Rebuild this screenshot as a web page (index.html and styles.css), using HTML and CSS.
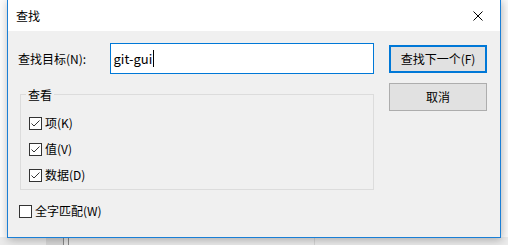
FILE: index.html
```html
<!DOCTYPE html>
<html lang="zh-CN">
<head>
<meta charset="utf-8">
<title>查找</title>
<link rel="stylesheet" href="styles.css">
</head>
<body>
<div class="desktop">
  <div class="desk-fill"></div>
  <div class="desk-strip">
    <div class="strip-a"></div>
    <div class="strip-b"></div>
    <div class="strip-line"></div>
    <div class="strip-gap"></div>
    <div class="strip-line"></div>
    <div class="strip-c"></div>
    <div class="strip-faint"></div>
    <div class="strip-d"></div>
  </div>
</div>

<div class="dialog">
  <div class="titlebar">
    <span class="title">查找</span>
    <svg class="close" width="10" height="10" viewBox="0 0 10 10"><path d="M0.5 0.5 L9.5 9.5 M9.5 0.5 L0.5 9.5" stroke="#000" stroke-width="1" fill="none"/></svg>
  </div>
  <div class="body">
    <div class="left">
      <div class="row-find">
        <span class="find-label">查找目标(N):</span>
        <div class="textbox"><span class="typed">git-gui</span><span class="caret"></span></div>
      </div>
      <div class="group">
        <span class="legend">查看</span>
        <div class="checks">
          <label class="check"><span class="box checked"><svg width="13" height="13" viewBox="0 0 13 13"><rect x="0.5" y="0.5" width="12" height="12" fill="#fff" stroke="#333"/><path d="M2.5 6.5 L5 9 L10.5 3.5" stroke="#333" stroke-width="1" fill="none"/></svg></span>项(K)</label>
          <label class="check"><span class="box checked"><svg width="13" height="13" viewBox="0 0 13 13"><rect x="0.5" y="0.5" width="12" height="12" fill="#fff" stroke="#333"/><path d="M2.5 6.5 L5 9 L10.5 3.5" stroke="#333" stroke-width="1" fill="none"/></svg></span>值(V)</label>
          <label class="check"><span class="box checked"><svg width="13" height="13" viewBox="0 0 13 13"><rect x="0.5" y="0.5" width="12" height="12" fill="#fff" stroke="#333"/><path d="M2.5 6.5 L5 9 L10.5 3.5" stroke="#333" stroke-width="1" fill="none"/></svg></span>数据(D)</label>
        </div>
      </div>
      <label class="check whole"><span class="box"><svg width="13" height="13" viewBox="0 0 13 13"><rect x="0.5" y="0.5" width="12" height="12" fill="#fff" stroke="#333"/></svg></span>全字匹配(W)</label>
    </div>
    <div class="right">
      <div class="btn default">查找下一个(F)</div>
      <div class="btn">取消</div>
    </div>
  </div>
</div>
</body>
</html>
```

FILE: styles.css
```css
html, body {
  margin: 0;
  padding: 0;
}
body {
  width: 508px;
  height: 245px;
  overflow: hidden;
  position: relative;
  background: #ffffff;
  font-family: "Noto Sans CJK SC", "Microsoft YaHei", sans-serif;
  font-size: 12px;
  color: #000;
}
.desktop {
  height: 245px;
  display: flex;
  flex-direction: column;
}
.desk-fill {
  flex: 1;
  background: #fbfbfb;
}
.desk-strip {
  height: 8px;
  display: flex;
  background: #ececec;
}
.strip-a { width: 46px; background: #ebebeb; }
.strip-b { width: 17px; background: #d9d9d9; }
.strip-line { width: 1px; background: #8a8a8a; }
.strip-gap { width: 4px; background: #e6e6e6; }
.strip-c { width: 245px; background: #ececec; }
.strip-faint { width: 1px; background: #d6d6d6; }
.strip-d { flex: 1; background: #ececec; }

.dialog {
  position: absolute;
  left: 7px;
  top: -1px;
  width: 492px;
  height: 237px;
  border: 1px solid #1a7fd6;
  background: #f0f0f0;
  box-shadow: 1px 2px 9px rgba(0, 0, 0, 0.28);
  display: flex;
  flex-direction: column;
}
.titlebar {
  height: 31px;
  background: #ffffff;
  display: flex;
  align-items: center;
  padding-left: 8px;
  padding-right: 17px;
}
.title {
  flex: 1;
  line-height: 16px;
  margin-top: 1px;
}
.close {
  display: block;
  margin-top: 0px;
}
.body {
  flex: 1;
  display: flex;
  padding: 12px 0 0 10px;
  gap: 15px;
}
.left {
  width: 356px;
  display: flex;
  flex-direction: column;
}
.row-find {
  display: flex;
  align-items: center;
  height: 31px;
}
.find-label {
  width: 93px;
  line-height: 16px;
}
.textbox {
  width: 261px;
  height: 29px;
  border: 1px solid #0078d7;
  background: #fff;
  display: flex;
  align-items: center;
  padding-left: 2px;
  box-sizing: content-box;
}
.typed {
  font-size: 13px;
  line-height: 16px;
}
.caret {
  width: 1px;
  height: 17px;
  background: #000;
  margin-left: 1px;
}
.group {
  margin: 20px 0 0 2px;
  width: 352px;
  border: 1px solid #dcdcdc;
  display: flex;
  flex-direction: column;
  align-items: flex-start;
}
.legend {
  margin: -8px 0 0 5px;
  padding: 0 2px;
  line-height: 16px;
  background: #f0f0f0;
}
.checks {
  display: flex;
  flex-direction: column;
  gap: 6px;
  padding: 10px 0 4px 8px;
}
.check {
  display: flex;
  align-items: center;
  height: 20px;
  line-height: 16px;
}
.box {
  display: block;
  width: 13px;
  height: 13px;
  margin-right: 3px;
}
.box svg { display: block; }
.whole {
  margin: 11px 0 0 1px;
}
.right {
  display: flex;
  flex-direction: column;
  gap: 10px;
  margin-top: 2px;
}
.btn {
  width: 96px;
  height: 26px;
  border: 1px solid #adadad;
  background: #e1e1e1;
  display: flex;
  align-items: center;
  justify-content: center;
  line-height: 16px;
}
.btn.default {
  width: 94px;
  height: 24px;
  border: 2px solid #0078d7;
}
```
